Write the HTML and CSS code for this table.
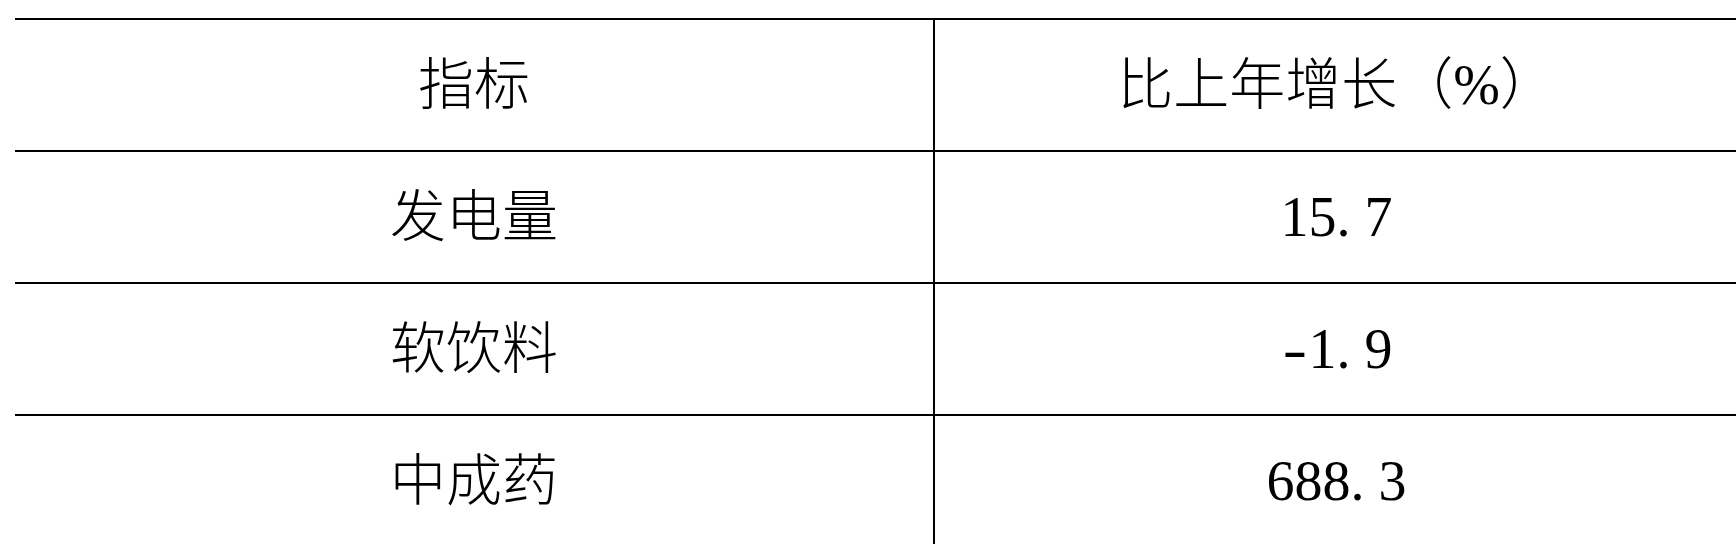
FILE: index.html
```html
<!DOCTYPE html>
<html lang="zh-CN">
<head>
<meta charset="utf-8">
<title>指标</title>
<link rel="stylesheet" href="styles.css">
</head>
<body>
<table class="stats">
  <tr><td class="name">指标</td><td class="head">比上年增长（%）</td></tr>
  <tr><td class="name">发电量</td><td class="val">15<span class="dot">.</span>7</td></tr>
  <tr><td class="name">软饮料</td><td class="val"><span class="sign">-</span>1<span class="dot">.</span>9</td></tr>
  <tr><td class="name">中成药</td><td class="val">688<span class="dot">.</span>3</td></tr>
</table>
</body>
</html>
```
FILE: styles.css
```css
html, body {
  margin: 0;
  padding: 0;
  overflow: hidden;
  background: #fff;
}
.stats {
  border-collapse: collapse;
  table-layout: fixed;
  margin: 18px 0 0 15px;
  width: 1723px;
  font-family: "Liberation Serif", "Noto Sans CJK SC", serif;
  font-weight: 300;
  color: #000;
}
.stats td {
  border-top: 2px solid #000;
  border-bottom: 2px solid #000;
  height: 130px;
  padding: 0;
  text-align: center;
  vertical-align: middle;
  font-size: 56px;
  line-height: 1;
}
.stats td.name {
  width: 918px;
  border-right: 2px solid #000;
}
.stats .dot {
  display: inline-block;
  width: 28px;
  text-align: left;
}
.stats .sign {
  display: inline-block;
  width: 28px;
  text-align: center;
  transform: scaleX(1.3);
}
```
